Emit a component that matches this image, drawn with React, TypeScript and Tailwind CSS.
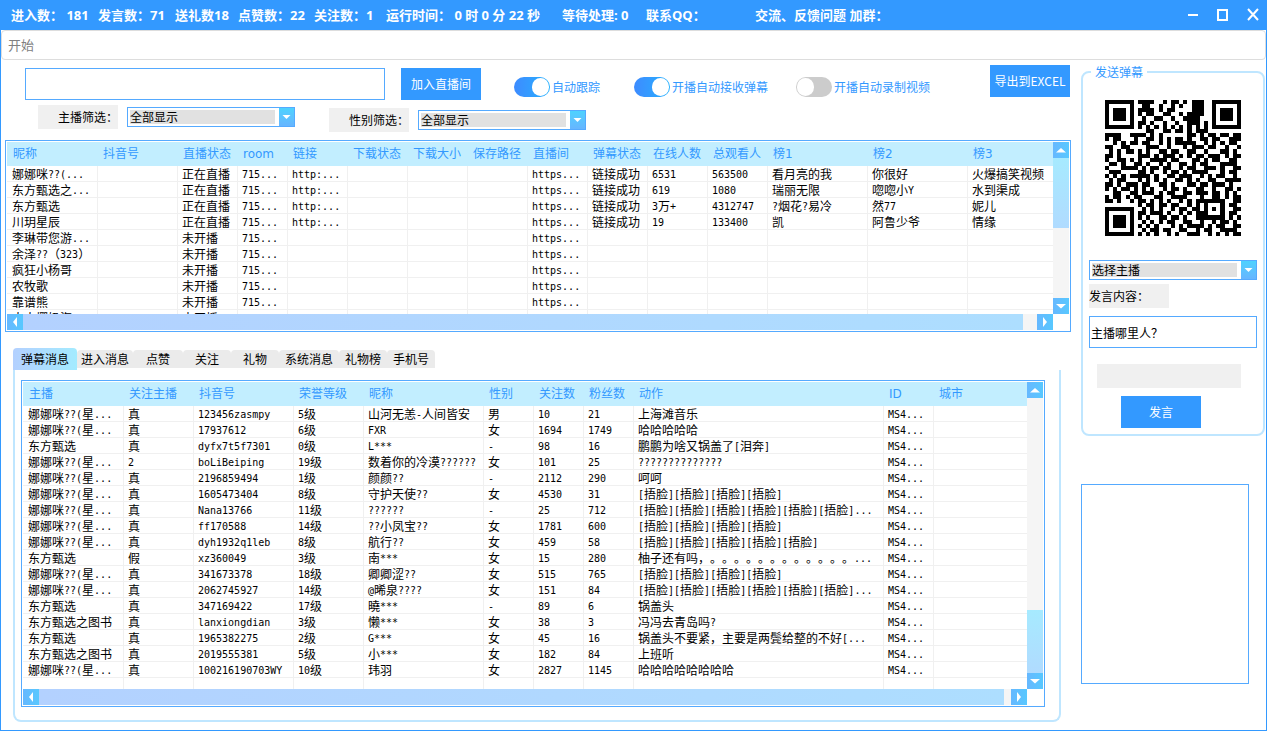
import { useState } from "react";
import clsx from "clsx";

interface Column {
	title: string;
	width: string;
}

interface DataTableProps {
	label: string;
	columns: Column[];
	rows: string[][];
	hThumb: string;
	vThumb: string;
	vThumbAtEnd?: boolean;
	className?: string;
}

const stats = [
	{ text: "进入数： 181", width: "w-[87px]" },
	{ text: "发言数：71", width: "w-[77px]" },
	{ text: "送礼数18", width: "w-[63px]" },
	{ text: "点赞数：22", width: "w-[76px]" },
	{ text: "关注数：1", width: "w-[72px]" },
	{ text: "运行时间： 0 时 0 分 22 秒", width: "w-[176px]" },
	{ text: "等待处理: 0", width: "w-[84px]" },
	{ text: "联系QQ：", width: "w-[109px]" },
	{ text: "交流、反馈问题 加群：", width: "w-[140px]" },
];

const roomColumns: Column[] = [
	{ title: "昵称", width: "w-[91px]" },
	{ title: "抖音号", width: "w-[80px]" },
	{ title: "直播状态", width: "w-[60px]" },
	{ title: "room", width: "w-[50px]" },
	{ title: "链接", width: "w-[60px]" },
	{ title: "下载状态", width: "w-[60px]" },
	{ title: "下载大小", width: "w-[60px]" },
	{ title: "保存路径", width: "w-[60px]" },
	{ title: "直播间", width: "w-[60px]" },
	{ title: "弹幕状态", width: "w-[60px]" },
	{ title: "在线人数", width: "w-[60px]" },
	{ title: "总观看人", width: "w-[60px]" },
	{ title: "榜1", width: "w-[100px]" },
	{ title: "榜2", width: "w-[100px]" },
	{ title: "榜3", width: "" },
];

const live = (name: string, ...rest: string[]) => [
	name, "", "正在直播", "715...", "http:...", "", "", "", "https...", "链接成功", ...rest,
];
const offline = (name: string) => [
	name, "", "未开播", "715...", "", "", "", "", "https...", "", "", "", "", "", "",
];

const roomRows = [
	live("娜娜咪??(...", "6531", "563500", "看月亮的我", "你很好", "火爆搞笑视频"),
	live("东方甄选之...", "619", "1080", "瑞丽无限", "唿唿小Y", "水到渠成"),
	live("东方甄选", "3万+", "4312747", "?烟花?易冷", "然77", "妮儿"),
	live("川玥星辰", "19", "133400", "凯", "阿鲁少爷", "情缘"),
	offline("李琳带您游..."),
	offline("余泽??（323）"),
	offline("疯狂小杨哥"),
	offline("农牧歌"),
	offline("靠谱熊"),
	offline("大大椰奶海"),
];

const messageColumns: Column[] = [
	{ title: "主播", width: "w-[101px]" },
	{ title: "关注主播", width: "w-[70px]" },
	{ title: "抖音号", width: "w-[100px]" },
	{ title: "荣誉等级", width: "w-[70px]" },
	{ title: "昵称", width: "w-[120px]" },
	{ title: "性别", width: "w-[50px]" },
	{ title: "关注数", width: "w-[50px]" },
	{ title: "粉丝数", width: "w-[50px]" },
	{ title: "动作", width: "w-[250px]" },
	{ title: "ID", width: "w-[50px]" },
	{ title: "城市", width: "" },
];

const nana = "娜娜咪??(星...";
const face = "[捂脸]";

const messageRows = [
	[nana, "真", "123456zasmpy", "5级", "山河无恙-人间皆安", "男", "10", "21", "上海滩音乐"],
	[nana, "真", "17937612", "6级", "FXR", "女", "1694", "1749", "哈哈哈哈哈"],
	["东方甄选", "真", "dyfx7t5f7301", "0级", "L***", "-", "98", "16", "鹏鹏为啥又锅盖了[泪奔]"],
	[nana, "2", "boLiBeiping", "19级", "数着你的冷漠??????", "女", "101", "25", "??????????????"],
	[nana, "真", "2196859494", "1级", "颜颜??", "-", "2112", "290", "呵呵"],
	[nana, "真", "1605473404", "8级", "守护天使??", "女", "4530", "31", face.repeat(4)],
	[nana, "真", "Nana13766", "11级", "??????", "-", "25", "712", face.repeat(6) + "..."],
	[nana, "真", "ff170588", "14级", "??小凤宝??", "女", "1781", "600", face.repeat(4)],
	[nana, "真", "dyh1932q1leb", "8级", "航行??", "女", "459", "58", face.repeat(5)],
	["东方甄选", "假", "xz360049", "3级", "南***", "女", "15", "280", "柚子还有吗，。。。。。。。。。。。。..."],
	[nana, "真", "341673378", "18级", "卿卿涩??", "女", "515", "765", face.repeat(4)],
	[nana, "真", "2062745927", "14级", "@晞泉????", "女", "151", "84", face.repeat(6) + "..."],
	["东方甄选", "真", "347169422", "17级", "曉***", "-", "89", "6", "锅盖头"],
	["东方甄选之图书", "真", "lanxiongdian", "3级", "懒***", "女", "38", "3", "冯冯去青岛吗?"],
	["东方甄选", "真", "1965382275", "2级", "G***", "女", "45", "16", "锅盖头不要紧，主要是两鬓给整的不好[..."],
	["东方甄选之图书", "真", "2019555381", "5级", "小***", "女", "182", "84", "上班听"],
	[nana, "真", "100216190703WY", "10级", "玮羽", "女", "2827", "1145", "哈哈哈哈哈哈哈哈"],
].map((row) => [...row, "MS4...", ""]);

// trailing blank row keeps the grid lines running to the scrollbar
messageRows.push(Array(11).fill(""));

const tabs = [
	{ name: "弹幕消息", width: "w-16" },
	{ name: "进入消息", width: "w-14" },
	{ name: "点赞", width: "w-[50px]" },
	{ name: "关注", width: "w-12" },
	{ name: "礼物", width: "w-12" },
	{ name: "系统消息", width: "w-[60px]" },
	{ name: "礼物榜", width: "w-12" },
	{ name: "手机号", width: "w-12" },
];

const qrRows = [
	"#######.####..#.##.#.###..#######",
	"#.....#..##..#..#.#..###..#.....#",
	"#.###.#.####.#.##....###..#.###.#",
	"#.###.#.#.##..##..#.####..#.###.#",
	"#.###.#..#..##..#..####...#.###.#",
	"#.....#.##.#..#..#..###.#.#.....#",
	"#######.#.#.#.#.#.#.#.#.#.#######",
	"..........##..##.##.#.###........",
	"####..####.#.#......##.#.##.##.##",
	"#.##...#..##.#.#.##.#..##.##..###",
	"..#.#.##.##..#.#.#####..#.#.#.##.",
	"##..##....###..#...#.###.##..#..#",
	".#.#.##.#.#..##.##..##..#...##.#.",
	"##.#....###.#.###.#.#.##.###.#.##",
	"#..##.#.#..####.##...##.#.##..##.",
	".##.#..##.#..#.#..##.#.##...####.",
	"#...####.#.##.##..#.##..###.#..##",
	".###....##.#..#.##.#.####...#.##.",
	"#.#.#.#####.#..##.###..#.#.##..#.",
	".#.##...#.#.#.#..##.#.#..##..####",
	"##.#.###.##..##.#...##.##.###.#..",
	"#.#.##.#.#.#..#.##.#..##..#..##.#",
	"..##..##.###.#.##..##.###.##.#.#.",
	"#.##.#.##...##..####...#..##.#.##",
	"##.#..#.##.#.#.#..#.#.#######..##",
	"........#.##.##.##..#.#.#...#.##.",
	"#######..#.#.#..#.##.##.#.#.#..##",
	"#.....#.##.###.#..#.#.###...#.##.",
	"#.###.#.#.#..##.##.#..#######.#.#",
	"#.###.#..#.#.#.##..##..#..#.##.#.",
	"#.###.#.#.#.#...#.#.####.#.##..##",
	"#.....#..#.##.##..##..#.##..####.",
	"#######.#.#.#..#.#..###..#.#.#.##",
];

const arrows = {
	up: "M3 10.5 8 6l5 4.5z",
	down: "M3 6h10l-5 4.5z",
	left: "M10 3v10L6 8z",
	right: "M6 3v10l4-5z",
};

function ArrowButton({ dir }: { dir: keyof typeof arrows }) {
	return (
		<button
			type="button"
			aria-label={`scroll ${dir}`}
			className="block size-4 shrink-0 bg-linear-to-r from-[#66b8ff] to-[#57c8ff]"
		>
			<svg viewBox="0 0 16 16" className="size-4 fill-white">
				<path d={arrows[dir]} />
			</svg>
		</button>
	);
}

// latin runs use a half-width mono face beside the full-width glyphs
function CellText({ text }: { text: string }) {
	return text.split(/([\x20-\x7e]+)/).map((part, i) =>
		i % 2 ? (
			<span
				key={i}
				className="align-[1px] font-['DejaVu_Sans_Mono',monospace] text-[10px] leading-3"
			>
				{part}
			</span>
		) : (
			part
		)
	);
}

function DataTable({
	label,
	columns,
	rows,
	hThumb,
	vThumb,
	vThumbAtEnd,
	className,
}: DataTableProps) {
	return (
		<div className={clsx("flex flex-col border border-[#55aaff] bg-white p-px", className)}>
			<div className="flex min-h-0 flex-1">
				<div className="min-w-0 flex-1 overflow-hidden">
					<table aria-label={label} className="w-full table-fixed border-collapse">
						<thead>
							<tr className="h-6 bg-[#c2eeff]">
								{columns.map((col) => (
									<th
										key={col.title}
										className={clsx(
											"overflow-hidden p-0 pl-[5px] text-left font-['DejaVu_Sans','Noto_Sans_CJK_SC',sans-serif] text-xs font-normal whitespace-nowrap text-[#3399ff] first:pl-[6px]",
											col.width
										)}
									>
										{col.title}
									</th>
								))}
							</tr>
						</thead>
						<tbody>
							{rows.map((row, r) => (
								<tr key={r} className="h-4">
									{row.map((cell, c) => (
										<td
											key={c}
											className="h-4 overflow-hidden p-0 align-top shadow-[inset_-1px_-1px_0_#f0f0f0] first:pl-px last:shadow-[inset_0_-1px_0_#f0f0f0]"
										>
											<div className="h-4 overflow-hidden pl-1 leading-4 whitespace-nowrap [font-kerning:none] [text-spacing-trim:space-all]">
												<CellText text={cell} />
											</div>
										</td>
									))}
								</tr>
							))}
						</tbody>
					</table>
				</div>
				<div className="flex w-4 flex-col bg-[#f5f5f5]">
					<ArrowButton dir="up" />
					<div className={clsx("flex min-h-0 flex-1 flex-col", vThumbAtEnd && "justify-end")}>
						<div className={clsx("bg-linear-to-b from-[#a6eaff] to-[#b0dbff]", vThumb)} />
					</div>
					<ArrowButton dir="down" />
				</div>
			</div>
			<div className="mr-4 flex h-4 bg-[#f5f5f5]">
				<ArrowButton dir="left" />
				<div className="flex-1">
					<div className={clsx("h-4 bg-linear-to-r from-[#b3d1ff] to-[#addeff]", hThumb)} />
				</div>
				<ArrowButton dir="right" />
			</div>
		</div>
	);
}

function Select({ id, label, value }: { id: string; label?: string; value: string }) {
	return (
		<div className="flex h-5 w-[168px] border border-[#55aaff] bg-white">
			<select
				id={id}
				aria-label={label}
				className="my-[2px] mr-1 ml-[2px] min-w-0 flex-1 appearance-none bg-[#e1e1e1] text-xs leading-[14px] outline-none"
			>
				<option>{value}</option>
			</select>
			<span className="w-[15px] bg-linear-to-b from-[#4dd2ff] to-[#66b5ff]">
				<svg viewBox="0 0 15 18" className="h-[18px] w-[15px] fill-white">
					<path d="M3.500 7h8l-4 4z" />
				</svg>
			</span>
		</div>
	);
}

function Toggle({ label, defaultChecked }: { label: string; defaultChecked?: boolean }) {
	return (
		<label className="mb-[3px] flex items-center gap-[2px] text-xs text-[#3399ff]">
			<input type="checkbox" defaultChecked={defaultChecked} className="peer sr-only" />
			<span className="flex h-5 w-9 rounded-full bg-[#cccccc] p-px peer-checked:justify-end peer-checked:bg-linear-to-r peer-checked:from-[#3d8bff] peer-checked:to-[#1fb0ff]">
				<span className="h-[18px] w-[17px] rounded-full bg-white" />
			</span>
			{label}
		</label>
	);
}

function QrCode() {
	const d = qrRows
		.flatMap((row, y) => [...row].map((c, x) => (c === "#" ? `M${x} ${y}h1v1h-1z` : "")))
		.join("");
	return (
		<svg
			viewBox="0 0 33 33"
			shapeRendering="crispEdges"
			role="img"
			aria-label="QR"
			className="mx-auto size-[136px]"
		>
			<path d={d} />
		</svg>
	);
}

export default function App() {
	const [active, setActive] = useState("弹幕消息");

	return (
		<div className="flex h-screen flex-col overflow-hidden border border-t-0 border-[#3399ff] bg-white font-['Noto_Sans_CJK_SC',sans-serif] text-xs text-black">
			<header className="flex h-[30px] shrink-0 items-center bg-[#3399ff] pl-[10px] font-['Open_Sans','Noto_Sans_CJK_SC',sans-serif] text-[13px] font-bold whitespace-nowrap text-white">
				{stats.map((s) => (
					<span key={s.text} className={clsx("shrink-0 pt-[2px]", s.width)}>
						{s.text}
					</span>
				))}
				<div className="ml-auto flex gap-[14px] pr-[5px]">
					<button type="button" aria-label="最小化">
						<svg viewBox="0 0 16 16" className="size-4 stroke-white stroke-2">
							<path d="M3 8h10" />
						</svg>
					</button>
					<button type="button" aria-label="最大化">
						<svg viewBox="0 0 16 16" className="size-4 fill-none stroke-white stroke-2">
							<rect x="3" y="3" width="9" height="10" />
						</svg>
					</button>
					<button type="button" aria-label="关闭">
						<svg viewBox="0 0 16 16" className="size-4 stroke-white stroke-2">
							<path d="m3 2 10 11M13 2 3 13" />
						</svg>
					</button>
				</div>
			</header>

			<nav className="flex h-[30px] shrink-0 items-center rounded border border-[#dddddd] pl-[6px]">
				<button type="button" className="text-[13px] text-[#808080]">
					开始
				</button>
			</nav>

			<div className="flex min-h-0 flex-1 gap-[10px] pr-[2px]">
				<main className="flex min-w-0 flex-1 flex-col pt-[5px] pl-1">
					<div className="flex h-[35px] shrink-0 items-end pl-5 whitespace-nowrap">
						<input
							aria-label="直播间地址"
							className="mr-4 h-8 w-[360px] border border-[#55aaff] px-1 outline-none"
						/>
						<button type="button" className="mr-[33px] h-8 w-20 bg-[#3399ff] text-white">
							加入直播间
						</button>
						<div className="flex">
							<div className="w-[120px]">
								<Toggle label="自动跟踪" defaultChecked />
							</div>
							<div className="w-[162px]">
								<Toggle label="开播自动接收弹幕" defaultChecked />
							</div>
							<Toggle label="开播自动录制视频" />
						</div>
						<button
							type="button"
							className="mr-px ml-auto h-8 w-20 self-start bg-[#3399ff] text-white"
						>
							导出到EXCEL
						</button>
					</div>

					<div className="mt-[5px] flex shrink-0 gap-[34px] pl-[33px]">
						<div className="flex h-6 items-center gap-[9px]">
							<label htmlFor="anchor" className="h-6 w-20 bg-[#f0f0f0] text-right leading-6">
								主播筛选：
							</label>
							<Select id="anchor" value="全部显示" />
						</div>
						<div className="mt-[3px] flex h-6 items-center gap-[9px]">
							<label htmlFor="gender" className="h-6 w-20 bg-[#f0f0f0] text-right leading-6">
								性别筛选：
							</label>
							<Select id="gender" value="全部显示" />
						</div>
					</div>

					<DataTable
						label="直播间列表"
						columns={roomColumns}
						rows={roomRows}
						hThumb="w-[98.600%]"
						vThumb="h-1/2"
						className="mt-2 h-48 shrink-0"
					/>

					<div role="tablist" className="mt-4 ml-2 flex h-[22px] shrink-0 items-center">
						{tabs.map((tab) => (
							<button
								key={tab.name}
								type="button"
								role="tab"
								aria-selected={active === tab.name}
								onClick={() => setActive(tab.name)}
								className={clsx(
									"rounded-t whitespace-nowrap",
									tab.width,
									active === tab.name
										? "h-[22px] bg-linear-to-r from-[#b3d0ff] to-[#a3ebff]"
										: "h-[18px] bg-[#ebebeb]"
								)}
							>
								{tab.name}
							</button>
						))}
					</div>

					<section className="mr-[10px] mb-2 ml-2 flex min-h-0 flex-1 flex-col rounded-b-lg border-2 border-t-0 border-[#bfe6ff] pt-[10px] pr-[14px] pb-[13px] pl-[6px]">
						<DataTable
							label="弹幕消息"
							columns={messageColumns}
							rows={messageRows}
							hThumb="w-[99.300%]"
							vThumb="h-[23%]"
							vThumbAtEnd
							className="min-h-0 flex-1"
						/>
					</section>
				</main>

				<aside className="w-[183px] shrink-0 pt-1">
					<fieldset className="h-[372px] rounded-lg border-2 border-[#bfe6ff] px-[6px]">
						<legend className="ml-[2px] px-1 leading-4 text-[#3399ff]">发送弹幕</legend>
						<div className="mt-5">
							<QrCode />
						</div>
						<div className="mt-6">
							<Select id="target" label="选择主播" value="选择主播" />
						</div>
						<label htmlFor="content" className="mt-1 block h-6 w-20 bg-[#f0f0f0] leading-6">
							发言内容：
						</label>
						<input
							id="content"
							defaultValue="主播哪里人？"
							className="mt-2 h-8 w-[168px] border border-[#55aaff] px-px outline-none"
						/>
						<div className="mt-4 ml-2 h-6 w-36 bg-[#f0f0f0]" />
						<button type="button" className="mt-2 ml-8 h-8 w-20 bg-[#3399ff] text-white">
							发言
						</button>
					</fieldset>
					<textarea
						aria-label="日志"
						className="mt-12 block h-[200px] w-[168px] resize-none border border-[#55aaff] outline-none"
					/>
				</aside>
			</div>
		</div>
	);
}
